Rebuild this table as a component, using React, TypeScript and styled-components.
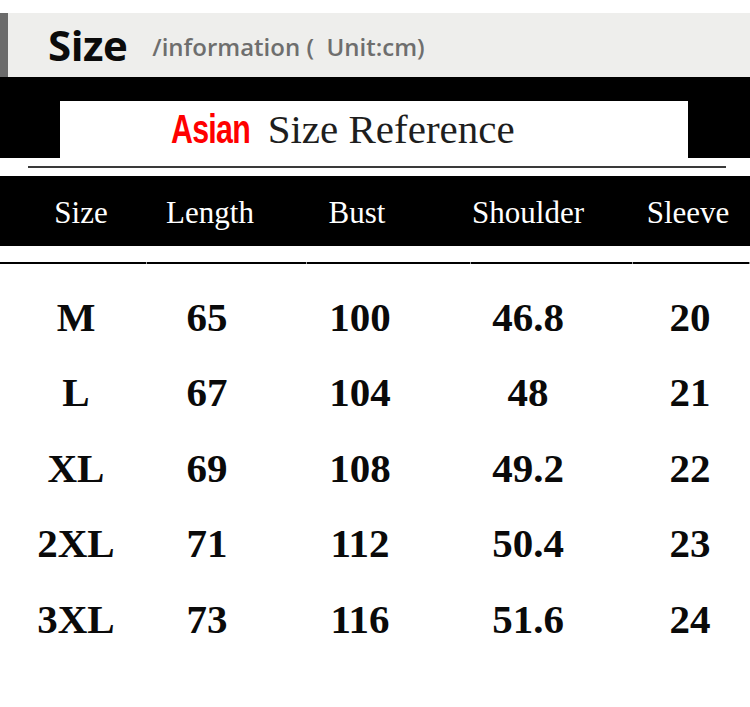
import styled, { createGlobalStyle } from 'styled-components'

const GlobalStyle = createGlobalStyle`
  html, body {
    margin: 0;
    padding: 0;
    background: #ffffff;
  }
`

const Page = styled.div`
  width: 750px;
  height: 707px;
  overflow: hidden;
  background: #ffffff;
  padding-top: 13px;
  box-sizing: border-box;
`

const TitleBar = styled.div`
  height: 64px;
  background: #eeeeec;
  border-left: 8px solid #6b6b6b;
  display: flex;
  align-items: center;
  padding-left: 40px;
  gap: 25px;
  box-sizing: border-box;
`

const TitleMain = styled.span`
  font-family: 'Open Sans', sans-serif;
  font-weight: 700;
  font-size: 42px;
  color: #0b0b0b;
  letter-spacing: -0.5px;
  line-height: 1;
`

const TitleSub = styled.span`
  font-family: 'Open Sans', sans-serif;
  font-weight: 600;
  font-size: 24px;
  color: #6e6e6e;
  line-height: 1;
  padding-top: 4px;
`

const Banner = styled.div`
  background: #000000;
  height: 81px;
  padding: 24px 62px 0 60px;
  box-sizing: border-box;
`

const BannerCard = styled.div`
  background: #ffffff;
  height: 100%;
  display: flex;
  align-items: center;
  padding-left: 111px;
  gap: 17px;
`

const RedWord = styled.span`
  display: inline-block;
  font-family: 'Liberation Sans', sans-serif;
  font-weight: 700;
  font-size: 41px;
  color: #ff0000;
  letter-spacing: -1px;
  line-height: 1;
  transform: scaleX(0.74);
  transform-origin: left center;
  margin-right: -27px;
`

const BannerText = styled.span`
  font-family: 'Liberation Serif', serif;
  font-size: 41px;
  color: #1e1e1e;
  line-height: 1;
`

const Divider = styled.div`
  height: 18px;
  display: flex;
  align-items: center;
  padding: 0 24px 0 28px;
  &::after {
    content: '';
    flex: 1;
    height: 2px;
    background: #3a3a3a;
  }
`

const columns = '152px 110px 196px 140px 1fr'

const HeaderRow = styled.div`
  background: #000000;
  height: 70px;
  display: grid;
  grid-template-columns: ${columns};
  align-items: center;
`

const HeadCell = styled.div<{ $shift?: number }>`
  font-family: 'Liberation Serif', serif;
  font-size: 31px;
  color: #ffffff;
  text-align: center;
  padding-left: ${({ $shift = 0 }) => ($shift > 0 ? $shift * 2 : 0)}px;
  padding-right: ${({ $shift = 0 }) => ($shift < 0 ? -$shift * 2 : 0)}px;
  padding-top: 4px;
`

const RuleRow = styled.div`
  margin-top: 16px;
  display: flex;
  gap: 1px;
  background: #9a9a9a;
  height: 2px;
`

const RuleSegment = styled.span<{ $w: number }>`
  display: block;
  width: ${({ $w }) => $w}px;
  background: #000000;
`

const Body = styled.div`
  padding-top: 15px;
`

const DataRow = styled.div`
  height: 75.5px;
  display: grid;
  grid-template-columns: ${columns};
  align-items: center;
`

const DataCell = styled.div<{ $shift?: number }>`
  font-family: 'Liberation Serif', serif;
  font-weight: 700;
  font-size: 41px;
  color: #0a0a0a;
  text-align: center;
  padding-left: ${({ $shift = 0 }) => ($shift > 0 ? $shift * 2 : 0)}px;
  padding-right: ${({ $shift = 0 }) => ($shift < 0 ? -$shift * 2 : 0)}px;
`

const headers = [
  { label: 'Size', shift: 5 },
  { label: 'Length', shift: 3 },
  { label: 'Bust', shift: -3 },
  { label: 'Shoulder', shift: 0 },
  { label: 'Sleeve', shift: 14 },
]

const rows = [
  ['M', '65', '100', '46.8', '20'],
  ['L', '67', '104', '48', '21'],
  ['XL', '69', '108', '49.2', '22'],
  ['2XL', '71', '112', '50.4', '23'],
  ['3XL', '73', '116', '51.6', '24'],
]

const segments = [146, 159, 163, 161, 116]

export default function App() {
  return (
    <>
      <GlobalStyle />
      <Page>
        <TitleBar>
          <TitleMain>Size</TitleMain>
          <TitleSub>/information (&nbsp; Unit:cm)</TitleSub>
        </TitleBar>
        <Banner>
          <BannerCard>
            <RedWord>Asian</RedWord>
            <BannerText>Size Reference</BannerText>
          </BannerCard>
        </Banner>
        <Divider />
        <HeaderRow>
          {headers.map((h) => (
            <HeadCell key={h.label} $shift={h.shift}>
              {h.label}
            </HeadCell>
          ))}
        </HeaderRow>
        <RuleRow>
          {segments.map((w, i) => (
            <RuleSegment key={i} $w={w} />
          ))}
        </RuleRow>
        <Body>
          {rows.map((r) => (
            <DataRow key={r[0]}>
              {r.map((v, i) => (
                <DataCell key={i} $shift={i === 4 ? 16 : 0}>
                  {v}
                </DataCell>
              ))}
            </DataRow>
          ))}
        </Body>
      </Page>
    </>
  )
}
